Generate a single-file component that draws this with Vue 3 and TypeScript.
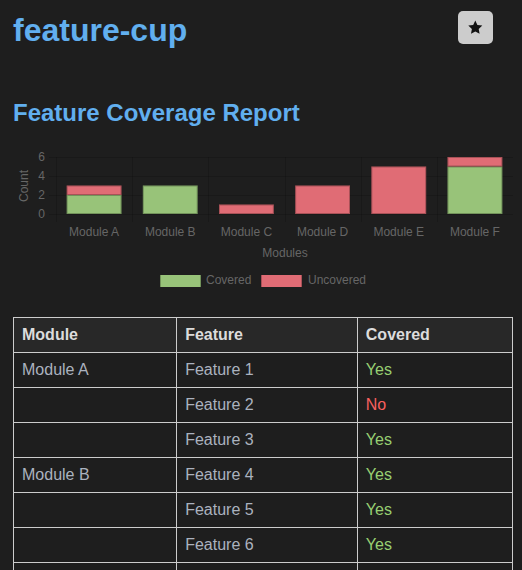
<script setup lang="ts">
import { ref } from 'vue'

interface ModuleCount {
  name: string
  covered: number
  uncovered: number
}

interface FeatureRow {
  module: string
  feature: string
  covered: boolean
}

const counts: ModuleCount[] = [
  { name: 'Module A', covered: 2, uncovered: 1 },
  { name: 'Module B', covered: 3, uncovered: 0 },
  { name: 'Module C', covered: 0, uncovered: 1 },
  { name: 'Module D', covered: 0, uncovered: 3 },
  { name: 'Module E', covered: 0, uncovered: 5 },
  { name: 'Module F', covered: 5, uncovered: 1 },
]

const rows: FeatureRow[] = [
  { module: 'Module A', feature: 'Feature 1', covered: true },
  { module: '', feature: 'Feature 2', covered: false },
  { module: '', feature: 'Feature 3', covered: true },
  { module: 'Module B', feature: 'Feature 4', covered: true },
  { module: '', feature: 'Feature 5', covered: true },
  { module: '', feature: 'Feature 6', covered: true },
  { module: '', feature: '', covered: true },
]

const starred = ref(true)

const plot = { left: 43, right: 500, top: 7, bottom: 64 }
const step = (plot.right - plot.left) / counts.length
const unit = (plot.bottom - plot.top) / 6
const ticks = [0, 2, 4, 6]

const gridX = (i: number) => Math.round(plot.left + i * step) + 0.5
const gridY = (value: number) => Math.round(plot.bottom - value * unit) + 0.5
const center = (i: number) => plot.left + (i + 0.5) * step
const barWidth = step * 0.72

interface Bar {
  key: string
  kind: string
  x: number
  y: number
  height: number
}

const bars: Bar[] = counts.flatMap((c, i) => {
  const x = center(i) - barWidth / 2
  return [
    { key: c.name + '-c', kind: 'covered', x, y: plot.bottom - c.covered * unit, height: c.covered * unit },
    {
      key: c.name + '-u',
      kind: 'uncovered',
      x,
      y: plot.bottom - (c.covered + c.uncovered) * unit,
      height: c.uncovered * unit,
    },
  ].filter((b) => b.height > 0)
})
</script>

<template>
  <main class="page">
    <header class="top">
      <h1>feature-cup</h1>
      <button class="star" type="button" aria-label="Star" :aria-pressed="starred" @click="starred = !starred">
        <svg viewBox="0 0 15 15" width="15" height="15" aria-hidden="true">
          <path d="M7.3 .5 9.4 5 14.3 5.6 10.7 8.9 11.6 13.8 7.3 11.5 3 13.8 3.9 8.9 .3 5.6 5.2 5Z" />
        </svg>
      </button>
    </header>

    <h2>Feature Coverage Report</h2>

    <svg class="chart" viewBox="0 0 500 150" role="img" aria-label="Feature coverage by module">
      <g class="grid">
        <line v-for="t in ticks" :key="t" x1="36" x2="500" :y1="gridY(t)" :y2="gridY(t)" />
        <line v-for="(c, i) in counts" :key="c.name" :x1="gridX(i)" :x2="gridX(i)" y1="7" y2="72" />
      </g>
      <g v-for="b in bars" :key="b.key" :class="b.kind">
        <rect :x="b.x" :y="b.y" :width="barWidth" :height="b.height" />
        <rect class="edge" :x="b.x + 0.5" :y="b.y + 0.5" :width="barWidth - 1" :height="b.height - 1" />
      </g>
      <text v-for="t in ticks" :key="t" class="end" x="32" :y="plot.bottom - t * unit + 4">{{ t }}</text>
      <text v-for="(c, i) in counts" :key="c.name" class="mid" :x="center(i)" y="86">{{ c.name }}</text>
      <text class="mid" transform="translate(15 36) rotate(-90)">Count</text>
      <text class="mid" x="272" y="107">Modules</text>
      <g class="covered">
        <rect x="147" y="125" width="41" height="12" />
        <path class="edge" d="M147.5 125V137M187.5 125V137" />
      </g>
      <text x="193" y="134">Covered</text>
      <g class="uncovered">
        <rect x="248" y="125" width="41" height="12" />
        <path class="edge" d="M248.5 125V137M288.5 125V137" />
      </g>
      <text x="295" y="134">Uncovered</text>
    </svg>

    <table>
      <thead>
        <tr>
          <th class="col-module" scope="col">Module</th>
          <th class="col-feature" scope="col">Feature</th>
          <th scope="col">Covered</th>
        </tr>
      </thead>
      <tbody>
        <tr v-for="(r, i) in rows" :key="i">
          <td>{{ r.module }}</td>
          <td>{{ r.feature }}</td>
          <td :class="r.covered ? 'yes' : 'no'">{{ r.feature ? (r.covered ? 'Yes' : 'No') : '' }}</td>
        </tr>
      </tbody>
    </table>
  </main>
</template>

<style>
html {
  background: #1e1e1e;
}
body {
  margin: 0;
  overflow: hidden;
}
#app {
  height: 100vh;
  overflow: hidden;
}
</style>

<style scoped>
.page {
  padding: 11px 9px 0 13px;
  background: #1e1e1e;
  color: #abb2bf;
  font: 16px/18px "Liberation Sans", Arial, sans-serif;
}
.top {
  display: flex;
  justify-content: space-between;
  align-items: flex-start;
  padding-right: 20px;
}
h1,
h2 {
  margin: 0;
  color: #61afef;
}
h1 {
  font-size: 32px;
  line-height: 38px;
}
h2 {
  margin-top: 50px;
  font-size: 24px;
  line-height: 28px;
}
.star {
  display: flex;
  align-items: center;
  justify-content: center;
  width: 35px;
  height: 33px;
  padding: 0;
  border: 0;
  border-radius: 5px;
  background: #ccc;
  color: #111;
}
.star path {
  fill: currentColor;
}
.chart {
  display: block;
  width: 100%;
  margin: 23px 0 17px;
  font-size: 12px;
}
.chart text {
  fill: #666;
}
.mid {
  text-anchor: middle;
}
.end {
  text-anchor: end;
}
.grid line {
  stroke: rgba(0, 0, 0, 0.15);
}
.covered rect {
  fill: #98c379;
}
.uncovered rect {
  fill: #e06c75;
}
.chart .edge {
  fill: none;
  stroke: rgba(0, 0, 0, 0.25);
}
table {
  width: 100%;
  border-collapse: collapse;
  table-layout: fixed;
}
th,
td {
  box-sizing: border-box;
  height: 35px;
  padding: 8px;
  border: 1px solid #ccc;
  text-align: left;
}
th {
  background: #282828;
  color: #dcdcdc;
}
.col-module {
  width: 32.7%;
}
.col-feature {
  width: 36.2%;
}
.yes {
  color: #98cf72;
}
.no {
  color: #f9605f;
}
</style>
